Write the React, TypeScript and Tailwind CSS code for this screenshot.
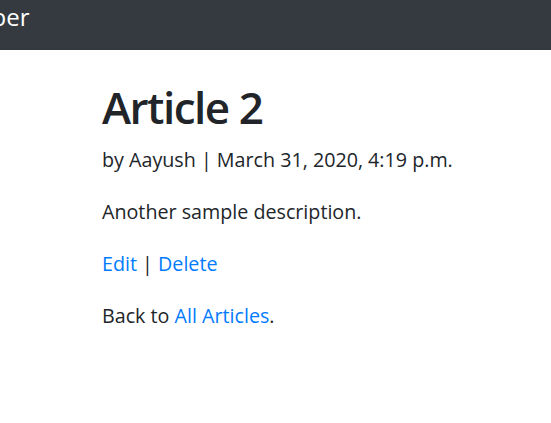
export default function App() {
  return (
    <div className="min-h-screen bg-white font-['Open_Sans',sans-serif] text-[#212529]">
      {/* Navbar */}
      <nav className="flex h-[50px] items-start overflow-hidden bg-[#343a40] pt-[1px]">
        <span className="-ml-[98px] whitespace-nowrap text-[24px] leading-[32px] text-white">
          Newspaper
        </span>
      </nav>

      {/* Article */}
      <main className="pl-[102px] pt-[31px]">
        <h1 className="mb-[11px] text-[44px] font-semibold leading-[1.2] tracking-[-1.5px]">Article 2</h1>
        <p className="mb-[22px] text-[19.7px] leading-[30px]">
          by Aayush | March 31, 2020, 4:19 p.m.
        </p>
        <p className="mb-[22px] text-[19.7px] leading-[30px]">Another sample description.</p>
        <p className="mb-[22px] text-[19.7px] leading-[30px]">
          <a href="#" className="text-[#007bff]">Edit</a> |{" "}
          <a href="#" className="text-[#007bff]">Delete</a>
        </p>
        <p className="text-[19.7px] leading-[30px]">
          Back to <a href="#" className="text-[#007bff]">All Articles</a>.
        </p>
      </main>
    </div>
  );
}
